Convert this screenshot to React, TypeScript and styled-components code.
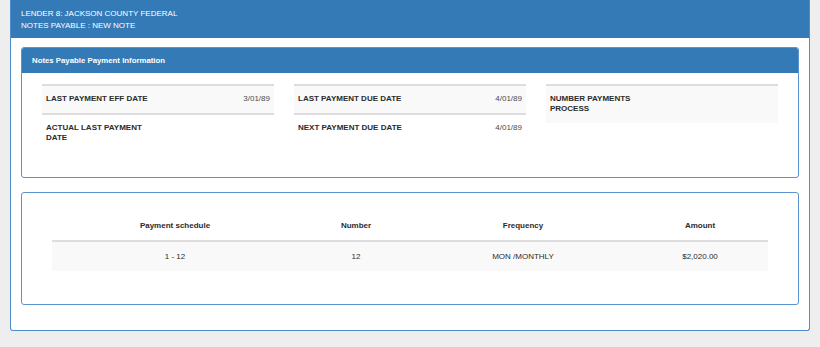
import React from 'react';
import styled, { createGlobalStyle } from 'styled-components';

const GlobalStyle = createGlobalStyle`
  html, body {
    margin: 0;
    padding: 0;
    background: #eeeeee;
    font-family: 'Liberation Sans', Arial, sans-serif;
    color: #333;
  }
`;

const Page = styled.div`
  padding: 0 10px 16px 10px;
`;

const OuterPanel = styled.div`
  width: 800px;
  box-sizing: border-box;
  background: #fff;
  border: 1px solid #4f8ccb;
  border-top: none;
  border-radius: 0 0 3px 3px;
`;

const TopHeader = styled.div`
  background: #337ab7;
  color: #fff;
  font-size: 8px;
  line-height: 12px;
  padding: 8px 10px 6px 10px;
  height: 38px;
  box-sizing: border-box;
`;

const OuterBody = styled.div`
  padding: 9px 10px 25px 10px;
  display: flex;
  flex-direction: column;
  gap: 14px;
`;

const Panel = styled.div`
  border: 1px solid #5a94cf;
  border-radius: 3px;
  background: #fff;
  overflow: hidden;
`;

const PanelHeading = styled.div`
  background: #337ab7;
  color: #fff;
  font-weight: bold;
  font-size: 7.8px;
  line-height: 10px;
  padding: 8px 10px 7px 10px;
`;

const FieldBody = styled.div`
  padding: 11px 20px 25px 20px;
  display: grid;
  grid-template-columns: repeat(3, 232px);
  column-gap: 20px;
  align-items: start;
`;

const FieldColumn = styled.div`
  display: flex;
  flex-direction: column;
`;

const FieldRow = styled.div<{ $striped?: boolean }>`
  display: flex;
  justify-content: space-between;
  align-items: flex-start;
  border-top: 2px solid #dddddd;
  background: ${(p) => (p.$striped ? '#f9f9f9' : '#fff')};
  padding: 8px 4px 9px 4px;
  font-size: 8px;
  line-height: 10px;
`;

const FieldLabel = styled.div`
  font-weight: bold;
  width: 115px;
  color: #2b2b2b;
`;

const FieldValue = styled.div`
  color: #4a4a4a;
  text-align: right;
`;

const TableBody = styled.div`
  padding: 20px 30px 33px 30px;
`;

const Table = styled.table`
  width: 100%;
  border-collapse: collapse;
  table-layout: fixed;
  font-size: 8px;
  line-height: 10px;
`;

const Th = styled.th`
  font-weight: bold;
  text-align: center;
  padding: 8px 4px 9px 4px;
  border-bottom: 2px solid #dddddd;
  color: #2b2b2b;
`;

const Td = styled.td`
  text-align: center;
  padding: 10px 4px 9px 4px;
  background: #f9f9f9;
  color: #2b2b2b;
`;

type Field = { label: string; value?: string };

const columns: Field[][] = [
  [
    { label: 'LAST PAYMENT EFF DATE', value: '3/01/89' },
    { label: 'ACTUAL LAST PAYMENT DATE' },
  ],
  [
    { label: 'LAST PAYMENT DUE DATE', value: '4/01/89' },
    { label: 'NEXT PAYMENT DUE DATE', value: '4/01/89' },
  ],
  [{ label: 'NUMBER PAYMENTS PROCESS' }],
];

const schedule = [{ range: '1 - 12', number: '12', frequency: 'MON /MONTHLY', amount: '$2,020.00' }];

export default function App() {
  return (
    <Page>
      <GlobalStyle />
      <OuterPanel>
        <TopHeader>
          <div>LENDER 8: JACKSON COUNTY FEDERAL</div>
          <div>NOTES PAYABLE : NEW NOTE</div>
        </TopHeader>
        <OuterBody>
          <Panel>
            <PanelHeading>Notes Payable Payment Information</PanelHeading>
            <FieldBody>
              {columns.map((col, ci) => (
                <FieldColumn key={ci}>
                  {col.map((f, i) => (
                    <FieldRow key={f.label} $striped={i % 2 === 0}>
                      <FieldLabel>{f.label}</FieldLabel>
                      <FieldValue>{f.value}</FieldValue>
                    </FieldRow>
                  ))}
                </FieldColumn>
              ))}
            </FieldBody>
          </Panel>
          <Panel>
            <TableBody>
              <Table>
                <colgroup>
                  <col style={{ width: 246 }} />
                  <col style={{ width: 116 }} />
                  <col style={{ width: 218 }} />
                  <col style={{ width: 136 }} />
                </colgroup>
                <thead>
                  <tr>
                    <Th>Payment schedule</Th>
                    <Th>Number</Th>
                    <Th>Frequency</Th>
                    <Th>Amount</Th>
                  </tr>
                </thead>
                <tbody>
                  {schedule.map((r) => (
                    <tr key={r.range}>
                      <Td>{r.range}</Td>
                      <Td>{r.number}</Td>
                      <Td>{r.frequency}</Td>
                      <Td>{r.amount}</Td>
                    </tr>
                  ))}
                </tbody>
              </Table>
            </TableBody>
          </Panel>
        </OuterBody>
      </OuterPanel>
    </Page>
  );
}
